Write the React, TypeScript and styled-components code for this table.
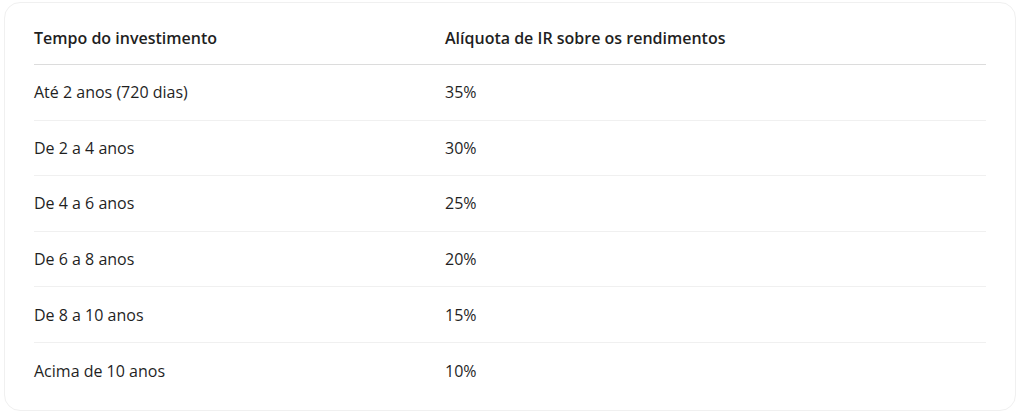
import styled, { createGlobalStyle } from "styled-components";

const GlobalStyle = createGlobalStyle`
  body {
    margin: 0;
    background: #fff;
    font-family: "Open Sans", "Noto Sans", sans-serif;
    color: #1f1f1f;
  }
`;

const rows = [
  { period: "Até 2 anos (720 dias)", rate: "35%" },
  { period: "De 2 a 4 anos", rate: "30%" },
  { period: "De 4 a 6 anos", rate: "25%" },
  { period: "De 6 a 8 anos", rate: "20%" },
  { period: "De 8 a 10 anos", rate: "15%" },
  { period: "Acima de 10 anos", rate: "10%" },
];

const App = () => {
  return (
    <>
      <GlobalStyle />
      <Page>
        <Card>
          <Table>
            <thead>
              <tr>
                <HeadCell $first>Tempo do investimento</HeadCell>
                <HeadCell>Alíquota de IR sobre os rendimentos</HeadCell>
              </tr>
            </thead>
            <tbody>
              {rows.map((row, i) => (
                <Row key={row.period} $last={i === rows.length - 1}>
                  <Cell $first>{row.period}</Cell>
                  <Cell>{row.rate}</Cell>
                </Row>
              ))}
            </tbody>
          </Table>
        </Card>
      </Page>
    </>
  );
};

const Page = styled.div`
  padding: 2px 8px 2px 4px;
`;

const Card = styled.div`
  width: 1012px;
  box-sizing: border-box;
  border: 1px solid #f0f0f0;
  border-radius: 16px;
  padding: 9px 29px 12px;
`;

const Table = styled.table`
  width: 100%;
  border-collapse: collapse;
  font-size: 16px;
`;

const HeadCell = styled.th<{ $first?: boolean }>`
  text-align: left;
  font-weight: 600;
  height: 52px;
  padding: 0;
  width: ${(p) => (p.$first ? "411px" : "auto")};
  border-bottom: 1px solid #dcdcdc;
  vertical-align: middle;
`;

const Row = styled.tr<{ $last?: boolean }>`
  height: 55.6px;
  border-bottom: ${(p) => (p.$last ? "none" : "1px solid #f0f0f0")};
`;

const Cell = styled.td<{ $first?: boolean }>`
  padding: 0;
  vertical-align: middle;
  width: ${(p) => (p.$first ? "411px" : "auto")};
`;

export default App;
